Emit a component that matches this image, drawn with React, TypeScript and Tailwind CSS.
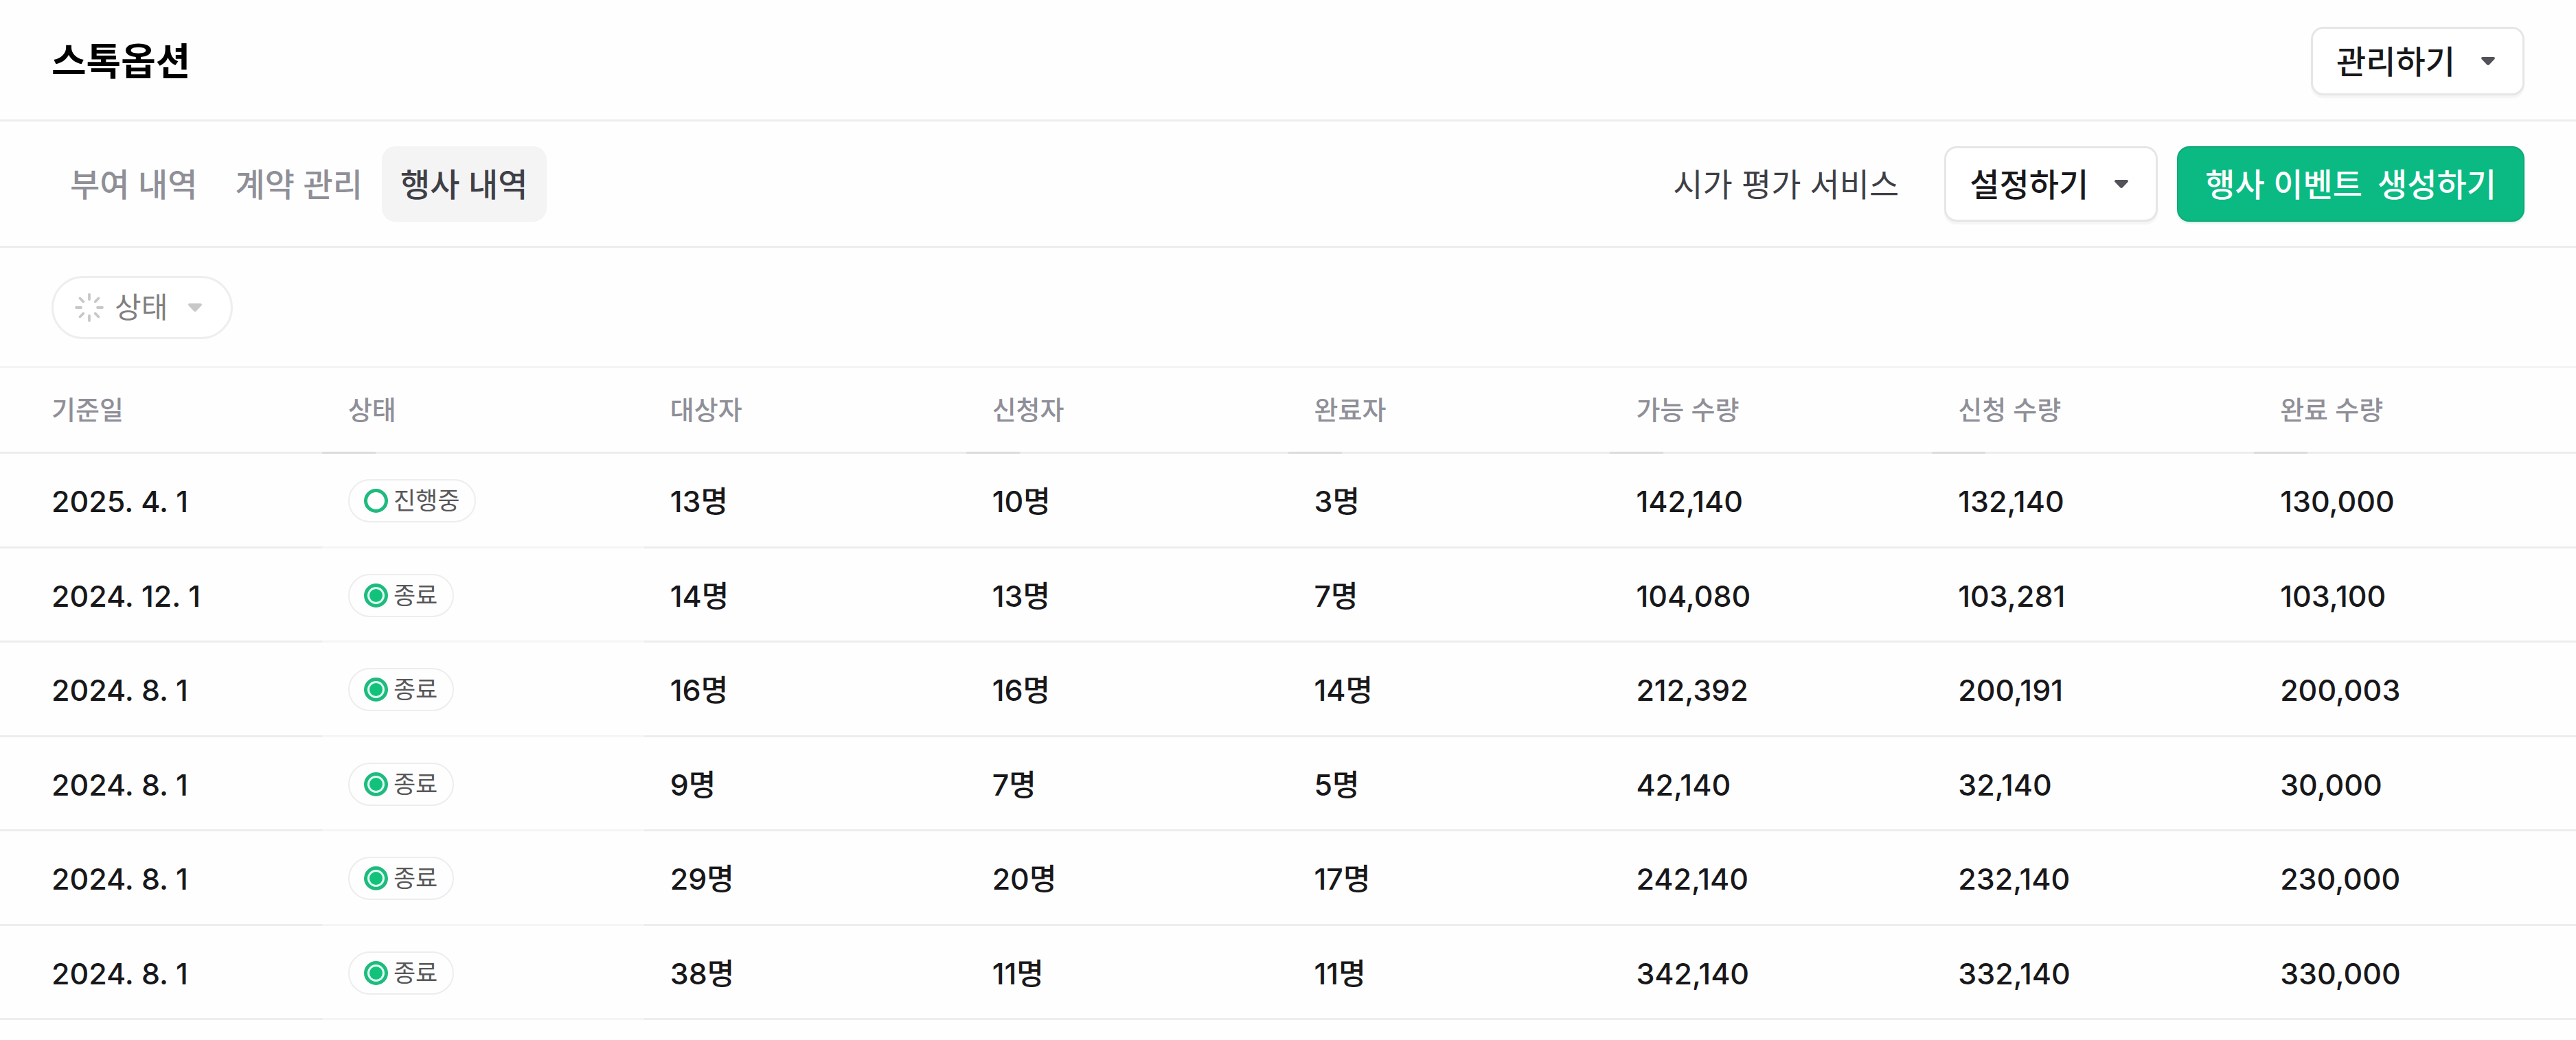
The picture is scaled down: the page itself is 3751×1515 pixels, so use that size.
import React from 'react';

type Status = '진행중' | '종료';

const tabs = ['부여 내역', '계약 관리', '행사 내역'];

const columns = [
  { label: '기준일', marker: false },
  { label: '상태', marker: true },
  { label: '대상자', marker: false },
  { label: '신청자', marker: true },
  { label: '완료자', marker: true },
  { label: '가능 수량', marker: true },
  { label: '신청 수량', marker: true },
  { label: '완료 수량', marker: true },
];

const events: { date: string; status: Status; values: string[] }[] = [
  { date: '2025. 4. 1', status: '진행중', values: ['13명', '10명', '3명', '142,140', '132,140', '130,000'] },
  { date: '2024. 12. 1', status: '종료', values: ['14명', '13명', '7명', '104,080', '103,281', '103,100'] },
  { date: '2024. 8. 1', status: '종료', values: ['16명', '16명', '14명', '212,392', '200,191', '200,003'] },
  { date: '2024. 8. 1', status: '종료', values: ['9명', '7명', '5명', '42,140', '32,140', '30,000'] },
  { date: '2024. 8. 1', status: '종료', values: ['29명', '20명', '17명', '242,140', '232,140', '230,000'] },
  { date: '2024. 8. 1', status: '종료', values: ['38명', '11명', '11명', '342,140', '332,140', '330,000'] },
];

const Caret = ({ className }: { className: string }) => (
  <svg viewBox="0 0 20 12" className={`h-3 w-5 shrink-0 ${className}`} fill="currentColor" aria-hidden="true">
    <path d="M2 0h16c1.800 0 2.600 2 1.300 3.300l-7.600 7.900c-1 1-2.400 1-3.400 0L.7 3.300C-.6 2 .2 0 2 0Z" />
  </svg>
);

const SpinnerIcon = () => (
  <svg
    viewBox="0 0 42 42"
    className="size-[42px] shrink-0 text-[#c8c8c8]"
    fill="none"
    stroke="currentColor"
    strokeWidth="3.800"
    strokeLinecap="round"
    aria-hidden="true"
  >
    <path d="M21 2v7M21 33v7M2 21h7M33 21h7M7.500 7.500l4.800 4.800M29.700 29.700l4.800 4.800M7.500 34.500l4.800-4.800M29.700 12.300l4.800-4.800" />
  </svg>
);

const StatusBadge = ({ status }: { status: Status }) => (
  <span className="inline-flex h-[63px] items-center gap-2 rounded-full border-2 border-[#ededee] pr-[22px] pl-[21px] align-middle text-[35px] leading-none text-[#58585a]">
    <svg viewBox="0 0 35 35" className="size-[35px] shrink-0" aria-hidden="true">
      <circle cx="17.500" cy="17.500" r="15" fill={status === '종료' ? '#e0fdf4' : '#fff'} stroke="#1fbb7e" strokeWidth="5" />
      {status === '종료' && <circle cx="17.500" cy="17.500" r="9.500" fill="#12c27b" />}
    </svg>
    {status}
  </span>
);

const MenuButton = ({ label, size }: { label: string; size: string }) => (
  <button
    type="button"
    aria-haspopup="menu"
    className={`flex items-center gap-[38px] rounded-[18px] border-3 border-[#e6e6e8] bg-white pr-10 pl-[34px] text-[47px] leading-none font-medium text-[#18181b] shadow-[0_4px_2px_rgba(0,0,0,0.04)] ${size}`}
  >
    {label}
    <Caret className="text-[#52525b]" />
  </button>
);

const App = () => {
  return (
    <main className="min-h-screen bg-[#fefefe] font-[Inter,'Noto_Sans_CJK_KR',sans-serif] whitespace-nowrap">
      <header className="flex items-center justify-between border-b-3 border-[#ededed] px-[75px] pt-[39px] pb-[35px]">
        <h1 className="text-[55px] leading-none font-semibold text-black">스톡옵션</h1>
        <MenuButton label="관리하기" size="h-[100px]" />
      </header>

      <div className="flex items-center justify-between border-b-3 border-[#ededed] px-[75px] pt-9 pb-[35px]">
        <nav className="flex gap-px">
          {tabs.map((tab) => (
            <a
              key={tab}
              href="#"
              aria-current={tab === '행사 내역' ? 'page' : undefined}
              className={`flex h-[110px] items-center rounded-[20px] px-[27px] text-[47px] leading-none font-medium ${
                tab === '행사 내역' ? 'bg-[#f4f4f5] text-[#3f3f46]' : 'text-[#8f8f98]'
              }`}
            >
              {tab}
            </a>
          ))}
        </nav>
        <div className="flex items-center">
          <a href="#" className="mr-[66px] text-[47px] leading-none text-[#3f3f46]">
            시가 평가 서비스
          </a>
          <MenuButton label="설정하기" size="mr-7 h-[110px]" />
          <button
            type="button"
            className="flex h-[110px] items-center gap-[22px] rounded-[18px] border-2 border-[#12a878] bg-[#0bba83] px-[39px] text-[47px] leading-none font-medium text-white shadow-[0_2px_3px_rgba(16,185,129,0.2)]"
          >
            <span>행사 이벤트</span>
            <span>생성하기</span>
          </button>
        </div>
      </div>

      <div className="flex border-b-3 border-[#f4f4f5] px-[75px] pt-[41px] pb-[39px]">
        <button
          type="button"
          aria-haspopup="listbox"
          className="flex h-[92px] items-center rounded-full border-3 border-[#eeeeee] bg-white pr-[42px] pl-[31px] text-[42px] leading-none text-[#808080]"
        >
          <SpinnerIcon />
          <span className="mr-[30px] ml-4">상태</span>
          <Caret className="text-[#c8c8c8]" />
        </button>
      </div>

      <table className="w-full table-fixed border-separate border-spacing-0 text-left">
        <thead>
          <tr>
            {columns.map(({ label, marker }) => (
              <th
                key={label}
                scope="col"
                className={`relative h-[125px] border-b-3 border-[#ededed] px-[38px] text-[38px] leading-none font-medium text-[#8f8f98] first:pl-[75px] ${
                  marker ? 'after:absolute after:top-full after:left-0 after:h-[3px] after:w-[78px] after:bg-[#dcdcdc]' : ''
                }`}
              >
                {label}
              </th>
            ))}
          </tr>
        </thead>
        <tbody>
          {events.map(({ date, status, values }, index) => (
            <tr key={index} className="h-[137px] text-[43px] leading-none font-medium text-[#18181b] odd:h-[138px]">
              <td className="border-b-3 border-[#ededed] pt-1 pl-[75px]">{date}</td>
              <td className="border-b-3 border-[#f5f5f5] pt-[2px] pl-[38px] font-normal">
                <StatusBadge status={status} />
              </td>
              {values.map((value, i) => (
                <td key={i} className="border-b-3 border-[#ededed] pt-1 pl-[38px]">
                  {value}
                </td>
              ))}
            </tr>
          ))}
        </tbody>
      </table>
    </main>
  );
};

export default App;
